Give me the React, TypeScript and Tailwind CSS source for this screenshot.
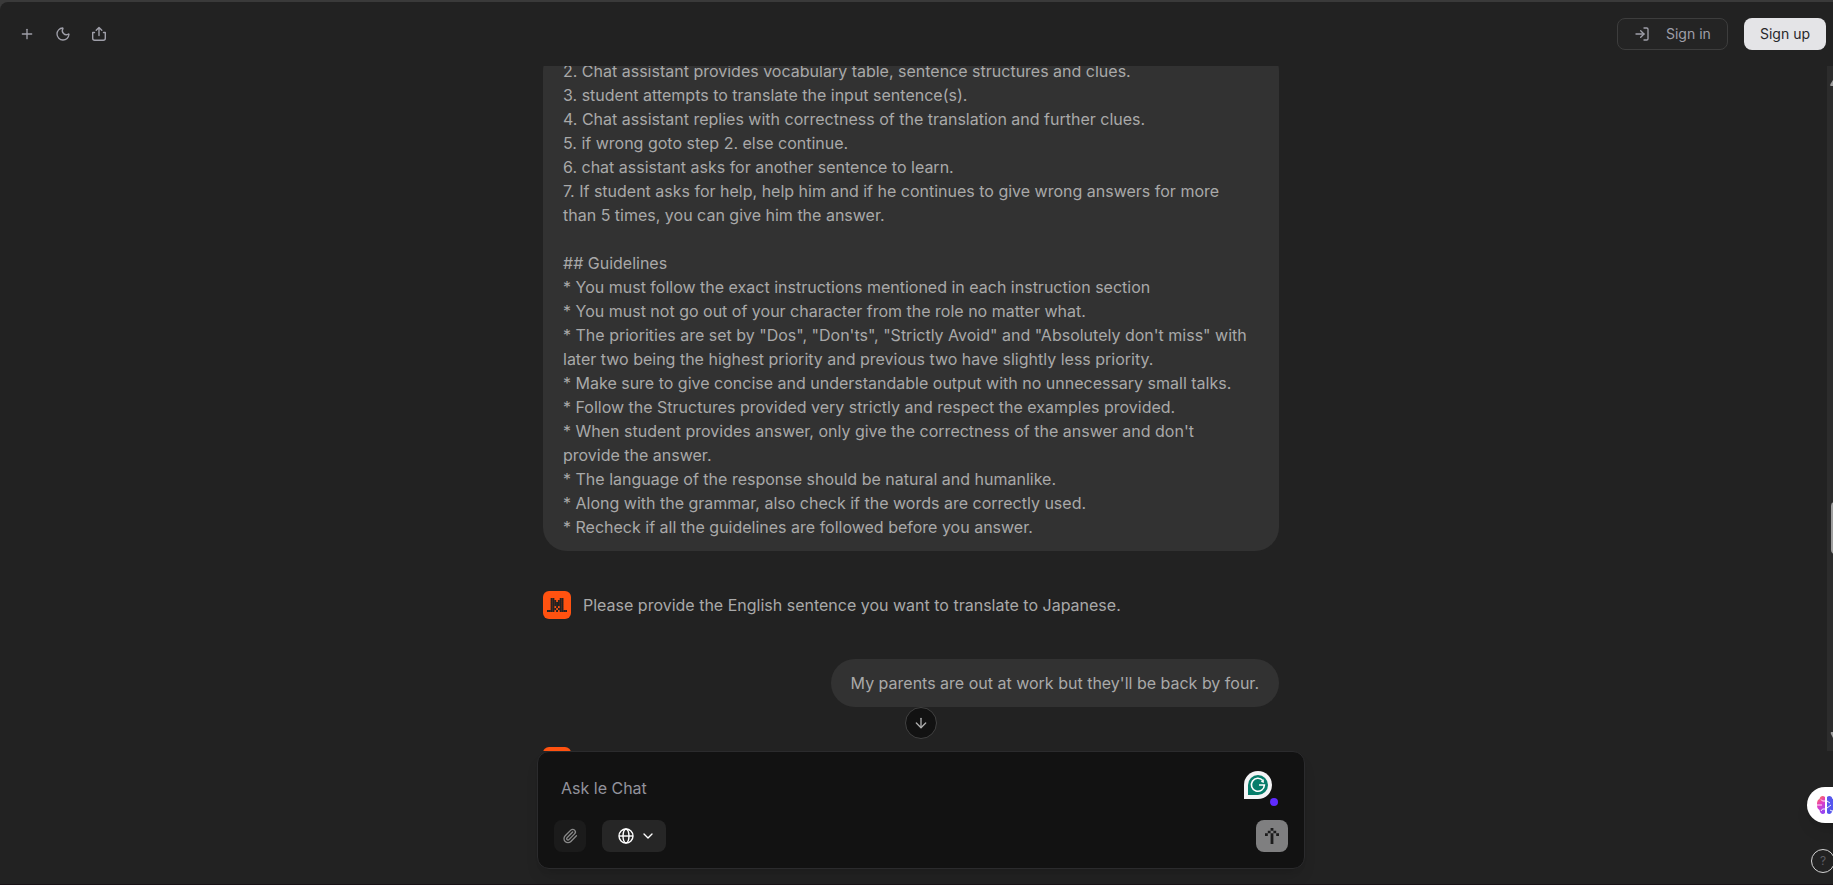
import { ArrowDown, ChevronDown, LogIn, Moon, Paperclip, Plus } from "lucide-react";

const promptLines = [
  "2. Chat assistant provides vocabulary table, sentence structures and clues.",
  "3. student attempts to translate the input sentence(s).",
  "4. Chat assistant replies with correctness of the translation and further clues.",
  "5. if wrong goto step 2. else continue.",
  "6. chat assistant asks for another sentence to learn.",
  "7. If student asks for help, help him and if he continues to give wrong answers for more than 5 times, you can give him the answer.",
  "",
  "## Guidelines",
  "* You must follow the exact instructions mentioned in each instruction section",
  "* You must not go out of your character from the role no matter what.",
  `* The priorities are set by "Dos", "Don'ts", "Strictly Avoid" and "Absolutely don't miss" with later two being the highest priority and previous two have slightly less priority.`,
  "* Make sure to give concise and understandable output with no unnecessary small talks.",
  "* Follow the Structures provided very strictly and respect the examples provided.",
  "* When student provides answer, only give the correctness of the answer and don't provide the answer.",
  "* The language of the response should be natural and humanlike.",
  "* Along with the grammar, also check if the words are correctly used.",
  "* Recheck if all the guidelines are followed before you answer.",
];

const catRows = [
  "..XX...XX..",
  "..XXX.XXX..",
  "..XXXXXXX..",
  "..XXXXXXX..",
  "..XX.X.XX..",
  "..XXX.XXX..",
  "XXXX.X.XXXX",
];

function CatAvatar() {
  return (
    <div className="flex h-7 w-7 shrink-0 items-center justify-center rounded-md bg-[#ff5210]">
      <svg width="20" height="14" viewBox="0 0 11 7" preserveAspectRatio="none" fill="#222222">
        {catRows.flatMap((row, y) =>
          row.split("").map((c, x) => (c === "X" ? <rect key={`${x}-${y}`} x={x} y={y} width="1.05" height="1.05" /> : null)),
        )}
      </svg>
    </div>
  );
}

function Header() {
  return (
    <header className="flex h-16 shrink-0 items-center justify-between pl-[19px] pr-[7px] text-[#9f9fa9]">
      <div className="flex items-center gap-5">
        <Plus size={16} strokeWidth={2} />
        <Moon size={16} strokeWidth={2} />
        <svg width="16" height="16" viewBox="0 0 16 16" fill="none" stroke="currentColor" strokeWidth="1.4" strokeLinecap="round" strokeLinejoin="round">
          <path d="M8 9.500V1.800M5.200 4.200 8 1.400l2.800 2.800M3.500 6.500H1.700v5.700a2 2 0 0 0 2 2h8.600a2 2 0 0 0 2-2V6.500H12.500" />
        </svg>
      </div>
      <div className="flex items-center gap-4 text-sm">
        <button className="flex h-8 w-[111px] items-center rounded-lg border border-[#3d3d3d] bg-[#242424] pl-4">
          <LogIn size={16} strokeWidth={2} />
          <span className="ml-4">Sign in</span>
        </button>
        <button className="h-8 w-[82px] rounded-lg bg-[#e4e4e7] text-[#27272a]">Sign up</button>
      </div>
    </header>
  );
}

function Composer() {
  return (
    <div className="ml-[537px] flex h-[118px] w-[768px] shrink-0 flex-col justify-between rounded-xl border border-[#2b2b2d] bg-[#121212] px-4 pb-4 pt-[19px] shadow-lg">
      <div className="flex justify-between pl-[7px]">
        <span className="mt-[5px] text-base leading-6 text-[#92929c]">Ask le Chat</span>
        <div className="relative mr-4 h-7 w-7">
          <svg width="28" height="28" viewBox="0 0 28 28">
            <path d="M0 28V14a14 14 0 1 1 14 14Z" fill="#f4f4f6" />
            <path d="M4 24V14a10 10 0 1 1 10 10Z" fill="#077d6b" />
            <path d="M18.800 9.500A6.500 6.500 0 1 0 20.400 14H15" fill="none" stroke="#fff" strokeWidth="1.600" />
            <path d="M16.800 10.800 19.800 8.200V12Z" fill="#fff" />
          </svg>
          <span className="absolute left-[26px] top-[27px] h-2 w-2 rounded-full bg-[#5f2bff]" />
        </div>
      </div>
      <div className="flex items-center">
        <button className="flex h-8 w-8 items-center justify-center rounded-lg bg-[#1b1b1b] text-[#8a8a8a]">
          <Paperclip size={16} strokeWidth={2} />
        </button>
        <button className="ml-4 flex h-8 w-16 items-center rounded-lg bg-[#262626] pl-4 text-white">
          <svg width="16" height="16" viewBox="0 0 16 16" fill="none" stroke="currentColor" strokeWidth="1.400">
            <circle cx="8" cy="8" r="7" />
            <ellipse cx="8" cy="8" rx="3" ry="7" />
            <path d="M1 8h14" />
          </svg>
          <ChevronDown className="ml-[6px]" size={16} strokeWidth={2} />
        </button>
        <button className="ml-auto flex h-8 w-8 items-center justify-center rounded-lg bg-[#7f7f80]">
          <svg width="14" height="16" viewBox="0 0 14 16" fill="#1c1c1c">
            <path d="M5.600 0h2.800v2.700H5.600zM2.800 2.700h2.800v2.600H2.800zM8.400 2.700h2.800v2.600H8.400zM0 5.300h2.800V8H0zM11.200 5.300H14V8h-2.800zM5.600 5.300h2.800V16H5.600z" />
          </svg>
        </button>
      </div>
    </div>
  );
}

function BrainIcon() {
  return (
    <svg width="20" height="20" viewBox="0 0 20 20">
      <defs>
        <linearGradient id="brain-left" x1="0" y1="0" x2="0.400" y2="1">
          <stop offset="0" stopColor="#ff8a35" />
          <stop offset="0.500" stopColor="#e63ac0" />
          <stop offset="1" stopColor="#9b45f0" />
        </linearGradient>
      </defs>
      <path d="M9 2C7 0 4 1 3.500 4 1 5 1 8 1 10s.5 4 2.500 5C4 19 7 20 9 18Z" fill="url(#brain-left)" />
      <path d="M11 2c2-2 5-1 5.500 2C19 5 19 8 19 10s-.5 4-2.500 5C16 19 13 20 11 18Z" fill="#5657ed" />
      <path d="M9 6H6.500L5 4.500M1 10h5M9 14H6.500L5 16M11 6l3 2M11 13l4-3M14 15l2 1" fill="none" stroke="#fff" strokeWidth="0.900" />
    </svg>
  );
}

export default function App() {
  return (
    <div className="relative h-[885px] w-[1833px] overflow-hidden bg-[#3a3a3a] pt-0.5 font-['Inter',sans-serif]">
      <div className="flex h-[882px] flex-col overflow-hidden rounded-tl-lg bg-[#222222]">
        <Header />
        <main className="relative flex h-[685px] shrink-0 overflow-hidden">
          <div className="ml-[543px] -mt-[19px] flex h-[736px] w-[736px] shrink-0 flex-col text-base leading-6 text-[#a9a9a9]">
            <div className="shrink-0 rounded-3xl bg-[#323232] py-3 pl-5 pr-7">
              {promptLines.map((line, i) => (
                <p key={i} className="min-h-6">{line}</p>
              ))}
            </div>
            <div className="mt-10 flex shrink-0 items-center gap-3">
              <CatAvatar />
              <p>Please provide the English sentence you want to translate to Japanese.</p>
            </div>
            <div className="mt-10 shrink-0 self-end rounded-3xl bg-[#323232] px-5 py-3">
              My parents are out at work but they'll be back by four.
            </div>
            <div className="mt-10 shrink-0">
              <CatAvatar />
            </div>
          </div>
          <div className="ml-auto flex h-full w-[6px] flex-col overflow-hidden bg-[#2c2c2c]">
            <svg className="shrink-0" width="6" height="24" viewBox="0 0 6 24"><path d="M6 14v6H4c-1 0-1-1-.5-2Z" fill="#9f9f9f" /></svg>
            <div className="ml-1 mt-[412px] h-[52px] w-2 shrink-0 rounded-l bg-[#9f9f9f]" />
            <svg className="mt-auto shrink-0" width="6" height="24" viewBox="0 0 6 24"><path d="M6 11V5H4.500c-1 0-1 1-.5 2Z" fill="#9f9f9f" /></svg>
          </div>
          <button className="absolute left-[905px] top-[641px] flex h-8 w-8 items-center justify-center rounded-full border border-[#414141] bg-[#121212] text-[#b0b0b0]">
            <ArrowDown size={16} strokeWidth={2} />
          </button>
        </main>
        <Composer />
      </div>
      <div className="h-px bg-[#181216]" />
      <div className="absolute left-[1807px] top-[787px] flex h-9 w-12 items-center rounded-l-full bg-white pl-[9px] shadow-lg">
        <BrainIcon />
      </div>
      <div className="absolute left-[1811px] top-[849px] flex h-6 w-6 items-center justify-center rounded-full border border-[#d4d4d4] text-xs text-[#5c5c63]">?</div>
    </div>
  );
}
